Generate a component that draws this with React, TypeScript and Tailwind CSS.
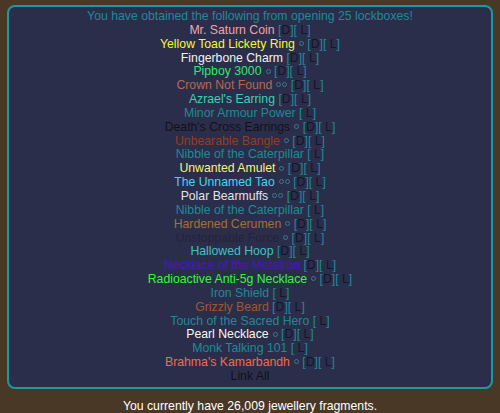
import React from "react";

type Item = { name: string; color: string; circles: number; d: boolean };

const items: Item[] = [
  { name: "Mr. Saturn Coin", color: "text-[#f2a2ac]", circles: 0, d: true },
  { name: "Yellow Toad Lickety Ring", color: "text-[#f6f636]", circles: 1, d: true },
  { name: "Fingerbone Charm", color: "text-[#f2f2f2]", circles: 0, d: true },
  { name: "Pipboy 3000", color: "text-[#2fe86c]", circles: 1, d: true },
  { name: "Crown Not Found", color: "text-[#b8684e]", circles: 2, d: true },
  { name: "Azrael's Earring", color: "text-[#38d2b4]", circles: 0, d: true },
  { name: "Minor Armour Power", color: "text-[#1f8a95]", circles: 0, d: false },
  { name: "Death's Cross Earrings", color: "text-[#111118]", circles: 1, d: true },
  { name: "Unbearable Bangle", color: "text-[#983c1e]", circles: 1, d: true },
  { name: "Nibble of the Caterpillar", color: "text-[#1f8a95]", circles: 0, d: false },
  { name: "Unwanted Amulet", color: "text-[#f8f27c]", circles: 1, d: true },
  { name: "The Unnamed Tao", color: "text-[#3ed6f2]", circles: 2, d: true },
  { name: "Polar Bearmuffs", color: "text-[#e2e2ea]", circles: 2, d: true },
  { name: "Nibble of the Caterpillar", color: "text-[#1f8a95]", circles: 0, d: false },
  { name: "Hardened Cerumen", color: "text-[#a2703a]", circles: 1, d: true },
  { name: "Unstoppable Force", color: "text-[#22243a]", circles: 1, d: true },
  { name: "Hallowed Hoop", color: "text-[#3ec2c2]", circles: 0, d: true },
  { name: "Necklace of the Metatron", color: "text-[#4a12c8]", circles: 0, d: true },
  { name: "Radioactive Anti-5g Necklace", color: "text-[#32fa32]", circles: 1, d: true },
  { name: "Iron Shield", color: "text-[#1f8a95]", circles: 0, d: false },
  { name: "Grizzly Beard", color: "text-[#a0582c]", circles: 0, d: true },
  { name: "Touch of the Sacred Hero", color: "text-[#1f8a95]", circles: 0, d: false },
  { name: "Pearl Necklace", color: "text-[#f8f8f0]", circles: 1, d: true },
  { name: "Monk Talking 101", color: "text-[#1f8a95]", circles: 0, d: false },
  { name: "Brahma's Kamarbandh", color: "text-[#f26a50]", circles: 1, d: true },
];

function Circles({ n }: { n: number }) {
  if (n === 0) return null;
  return (
    <span className="inline-flex gap-[1px] ml-[4px] align-middle relative top-[-1px]">
      {Array.from({ length: n }).map((_, i) => (
        <span
          key={i}
          className="inline-block w-[5px] h-[5px] rounded-full border border-[#3a7a8e]"
        />
      ))}
    </span>
  );
}

export default function App() {
  return (
    <div
      className="min-h-screen bg-[#4a3826] px-[7px] pt-[5px] text-[12.25px] leading-[13.85px]"
      style={{ fontFamily: '"Liberation Sans", Arial, sans-serif' }}
    >
      <div className="border-2 border-[#1e98a0] rounded-[8px] bg-[#2b2e4b] pt-[3px] pb-[3px] text-center">
        <div className="text-[#1f8a95]">
          You have obtained the following from opening 25 lockboxes!
        </div>
        {items.map((it, i) => (
          <div key={i}>
            <span className={it.color}>{it.name}</span>
            <Circles n={it.circles} />
            <span className="text-[#1f8a95]">
              {" "}
              {it.d && (
                <>
                  [<span className="text-[#15152a]">D</span>]
                </>
              )}
              [ <span className="text-[#15152a]">L</span>]
            </span>
          </div>
        ))}
        <div className="text-[#111118]">Link All</div>
      </div>
      <div className="text-center text-white mt-[11px]">
        You currently have 26,009 jewellery fragments.
      </div>
    </div>
  );
}
